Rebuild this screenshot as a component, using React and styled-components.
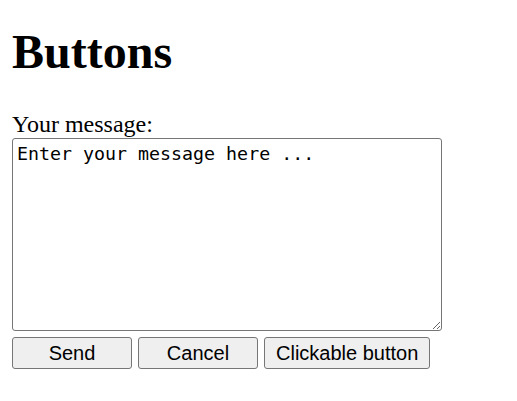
import styled, { createGlobalStyle } from "styled-components";

const GlobalStyle = createGlobalStyle`
    body {
        margin: 0;
        background: #fff;
        color: #000;
        font-family: "Liberation Serif", "Times New Roman", serif;
    }
`;

export default function App() {
    return (
        <Page>
            <GlobalStyle />
            <Title>Buttons</Title>
            <Label htmlFor="msg">Your message:</Label>
            <Message id="msg" defaultValue="Enter your message here ..." />
            <ButtonRow>
                <Button fixed>Send</Button>
                <Button fixed>Cancel</Button>
                <Button>Clickable button</Button>
            </ButtonRow>
        </Page>
    );
}

const Page = styled.div`
    display: flex;
    flex-direction: column;
    align-items: flex-start;
    padding: 0 12px 12px;
`;

const Title = styled.h1`
    font-size: 48px;
    font-weight: 700;
    line-height: 53px;
    margin: 25px 0 32px;
`;

const Label = styled.label`
    font-size: 24px;
    line-height: 27px;
    margin-top: 1px;
`;

const Message = styled.textarea`
    box-sizing: border-box;
    width: 430px;
    height: 193px;
    margin: 0;
    padding: 4px 4px 3px;
    border: 1px solid #767676;
    border-radius: 3px;
    font-family: "DejaVu Sans Mono", "Liberation Mono", monospace;
    font-size: 18.3px;
    line-height: 22px;
    color: #000;
    background: #fff;
    resize: both;
`;

const ButtonRow = styled.div`
    display: flex;
    gap: 6px;
    margin-top: 6px;
`;

const Button = styled.button`
    box-sizing: border-box;
    width: ${(props) => (props.fixed ? "120px" : "auto")};
    height: 32px;
    padding: 0 11px;
    border: 1px solid #767676;
    border-radius: 3px;
    background: #efefef;
    color: #000;
    font-family: "Liberation Sans", Arial, sans-serif;
    font-size: 20px;
`;
